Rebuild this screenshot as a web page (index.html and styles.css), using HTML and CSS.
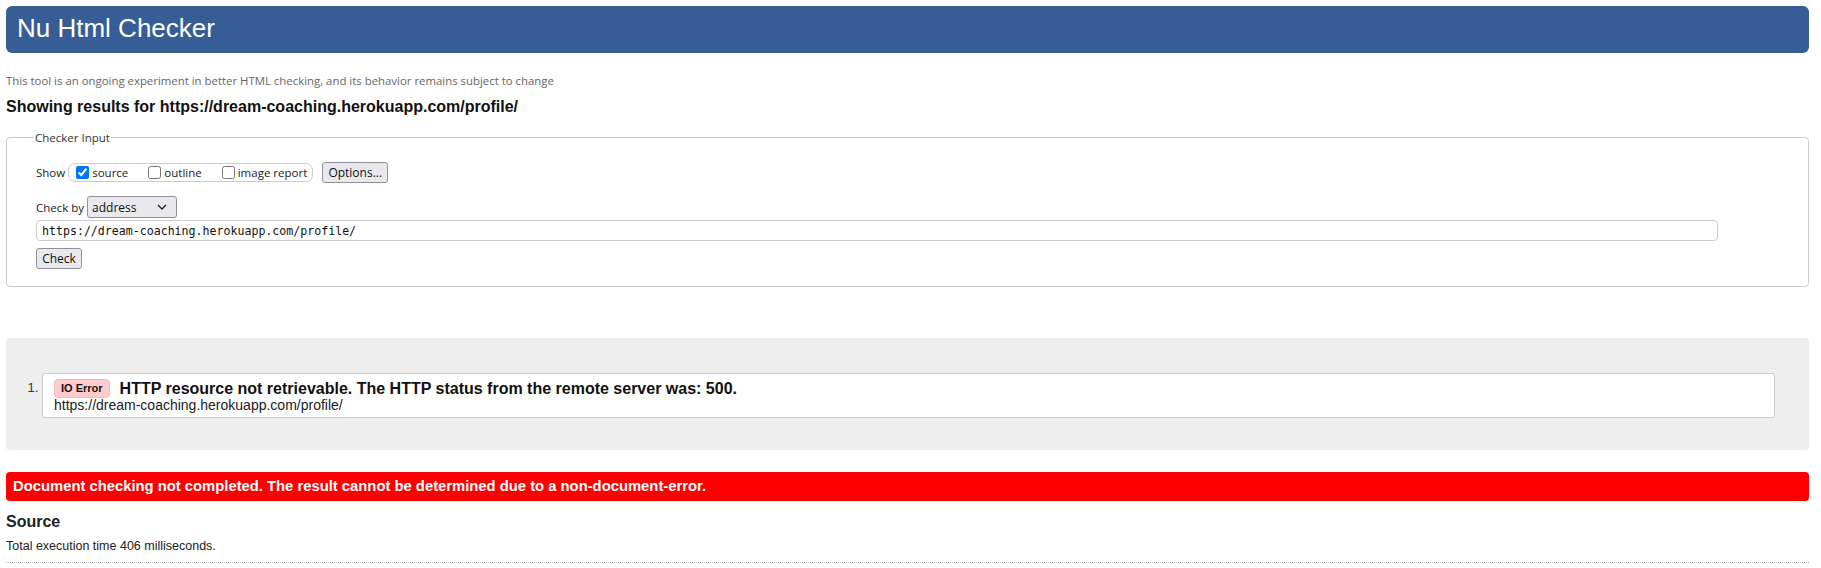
FILE: index.html
```html
<!DOCTYPE html>
<html lang="en">
<head>
<meta charset="utf-8">
<title>Nu Html Checker</title>
<link rel="stylesheet" href="styles.css">
</head>
<body>
<header class="banner"><h1 class="banner-title">Nu Html Checker</h1></header>
<p class="tagline">This tool is an ongoing experiment in better HTML checking, and its behavior remains subject to change</p>
<h2 class="results-for">Showing results for https://dream-coaching.herokuapp.com/profile/</h2>

<form class="checker">
  <fieldset class="checker-input">
    <legend class="checker-legend">Checker Input</legend>
    <div class="row row-show">
      <span class="label">Show</span>
      <span class="show-group">
        <label class="opt"><input type="checkbox" checked><span>source</span></label>
        <label class="opt"><input type="checkbox"><span>outline</span></label>
        <label class="opt"><input type="checkbox"><span>image report</span></label>
      </span>
      <button type="button" class="btn btn-options">Options...</button>
    </div>
    <div class="row row-by">
      <span class="label">Check by</span>
      <span class="select-wrap">
        <select class="select"><option>address</option></select>
        <svg class="chev" width="10" height="6" viewBox="0 0 10 6"><path d="M1 1 L5 5 L9 1" fill="none" stroke="#222" stroke-width="1.4"/></svg>
      </span>
    </div>
    <div class="row row-url">
      <input class="url" type="text" value="https://dream-coaching.herokuapp.com/profile/">
    </div>
    <div class="row row-check">
      <button type="button" class="btn btn-check">Check</button>
    </div>
  </fieldset>
</form>

<section class="results">
  <ol class="msgs">
    <li class="msg">
      <p class="msg-line"><span class="badge">IO Error</span><strong class="msg-text">HTTP resource not retrievable. The HTTP status from the remote server was: 500.</strong></p>
      <p class="msg-url">https://dream-coaching.herokuapp.com/profile/</p>
    </li>
  </ol>
</section>

<p class="failure">Document checking not completed. The result cannot be determined due to a non-document-error.</p>

<h2 class="source">Source</h2>
<p class="timing">Total execution time 406 milliseconds.</p>
```

FILE: styles.css
```css
html, body { background: #fff; }
body {
  margin: 6px 12px 0 6px;
  font-family: "Liberation Sans", Arial, sans-serif;
  color: #111;
}
.banner {
  height: 47px;
  background: #365d96;
  border-radius: 6px;
  display: flex;
  align-items: center;
}
.banner-title {
  margin: 0 0 0 11px;
  font-size: 26px;
  font-weight: normal;
  color: #fff;
  line-height: 1;
  position: relative;
  top: -2px;
}
.tagline {
  margin: 21px 0 0 0;
  font-family: "Open Sans", "Noto Sans", sans-serif;
  font-size: 11.4px;
  line-height: 14px;
  color: #666;
}
.results-for {
  margin: 10px 0 0 0;
  font-size: 16px;
  line-height: 18px;
  font-weight: bold;
  color: #111;
}
.checker { margin: 14px 0 0 0; }
.checker-input {
  margin: 0;
  border: 1px solid #ccc;
  border-radius: 4px;
  padding: 17px 0 17px 29px;
  font-family: "Open Sans", "Noto Sans", sans-serif;
  font-size: 11.5px;
  color: #222;
}
.checker-legend {
  margin-left: -2px;
  padding: 0 1px;
  font-size: 11.5px;
  line-height: 15px;
  color: #333;
}
.row { display: flex; align-items: center; }
.row-show { height: 21px; }
.row-by { height: 22px; margin-top: 13px; }
.row-url { margin-top: 2px; }
.row-check { margin-top: 7px; }
.label { margin-right: 3px; }
.show-group {
  display: flex;
  align-items: center;
  height: 17px;
  border: 1px solid #ccc;
  border-radius: 7px;
  padding: 0 5px 0 7px;
  margin-right: 9px;
}
.opt { display: flex; align-items: center; margin-right: 20px; }
.opt:last-child { margin-right: 0; }
.opt input {
  width: 13px; height: 13px;
  margin: 0 3px 0 0;
  accent-color: #0075ff;
}
.btn {
  font-family: "Open Sans", "Noto Sans", sans-serif;
  font-size: 12px;
  color: #111;
  background: #e9e9ed;
  border: 1px solid #8f8f9d;
  border-radius: 3px;
  padding: 0 4px;
  height: 21px;
  line-height: 19px;
}
.btn-options { width: 66px; }
.btn-check { width: 46px; }
.select-wrap { position: relative; display: inline-flex; }
.select {
  appearance: none;
  -webkit-appearance: none;
  width: 90px;
  height: 22px;
  font-family: "Open Sans", "Noto Sans", sans-serif;
  font-size: 12px;
  color: #111;
  background: #e9e9ed;
  border: 1px solid #8f8f9d;
  border-radius: 3px;
  padding: 0 0 0 4px;
  margin: 0;
}
.chev { position: absolute; right: 10px; top: 8px; pointer-events: none; }
.url {
  width: 1682px;
  height: 21px;
  box-sizing: border-box;
  border: 1px solid #ccc;
  border-radius: 4px;
  padding: 0 5px;
  font-family: "DejaVu Sans Mono", "Liberation Mono", monospace;
  font-size: 11.6px;
  color: #111;
  margin: 0;
}
.results {
  margin-top: 51px;
  background: #eee;
  border-radius: 4px;
  padding: 35px 34px 32px 0;
}
.msgs { margin: 0; padding: 0 0 0 36px; }
.msg {
  border: 1px solid #ccc;
  border-radius: 3px;
  background: #fff;
  padding: 5px 10px 5px 11px;
  font-size: 13px;
  color: #222;
}
.msg::marker { font-size: 13px; color: #333; }
.msg-line { margin: 0; display: flex; align-items: center; height: 19px; }
.badge {
  display: inline-block;
  background: #fcc;
  border: 1px solid #ebb;
  border-radius: 4px;
  font-size: 11px;
  font-weight: bold;
  line-height: 17px;
  padding: 0 6px;
  margin-right: 10px;
  color: #111;
}
.msg-text { font-size: 16px; color: #111; }
.msg-url { margin: 0; font-size: 14px; line-height: 14px; color: #222; }
.failure {
  margin: 22px 0 0 0;
  height: 29px;
  box-sizing: border-box;
  background: #f00;
  color: #fff;
  border-radius: 4px;
  font-weight: bold;
  font-size: 14.8px;
  line-height: 29px;
  padding-left: 7px;
}
.source {
  margin: 12px 0 0 0;
  font-size: 16px;
  line-height: 18px;
  font-weight: bold;
  color: #222;
}
.timing {
  margin: 8px 0 0 0;
  font-size: 12.5px;
  line-height: 14px;
  color: #222;
  padding-bottom: 9px;
  border-bottom: 1px dotted #aaa;
}
```
